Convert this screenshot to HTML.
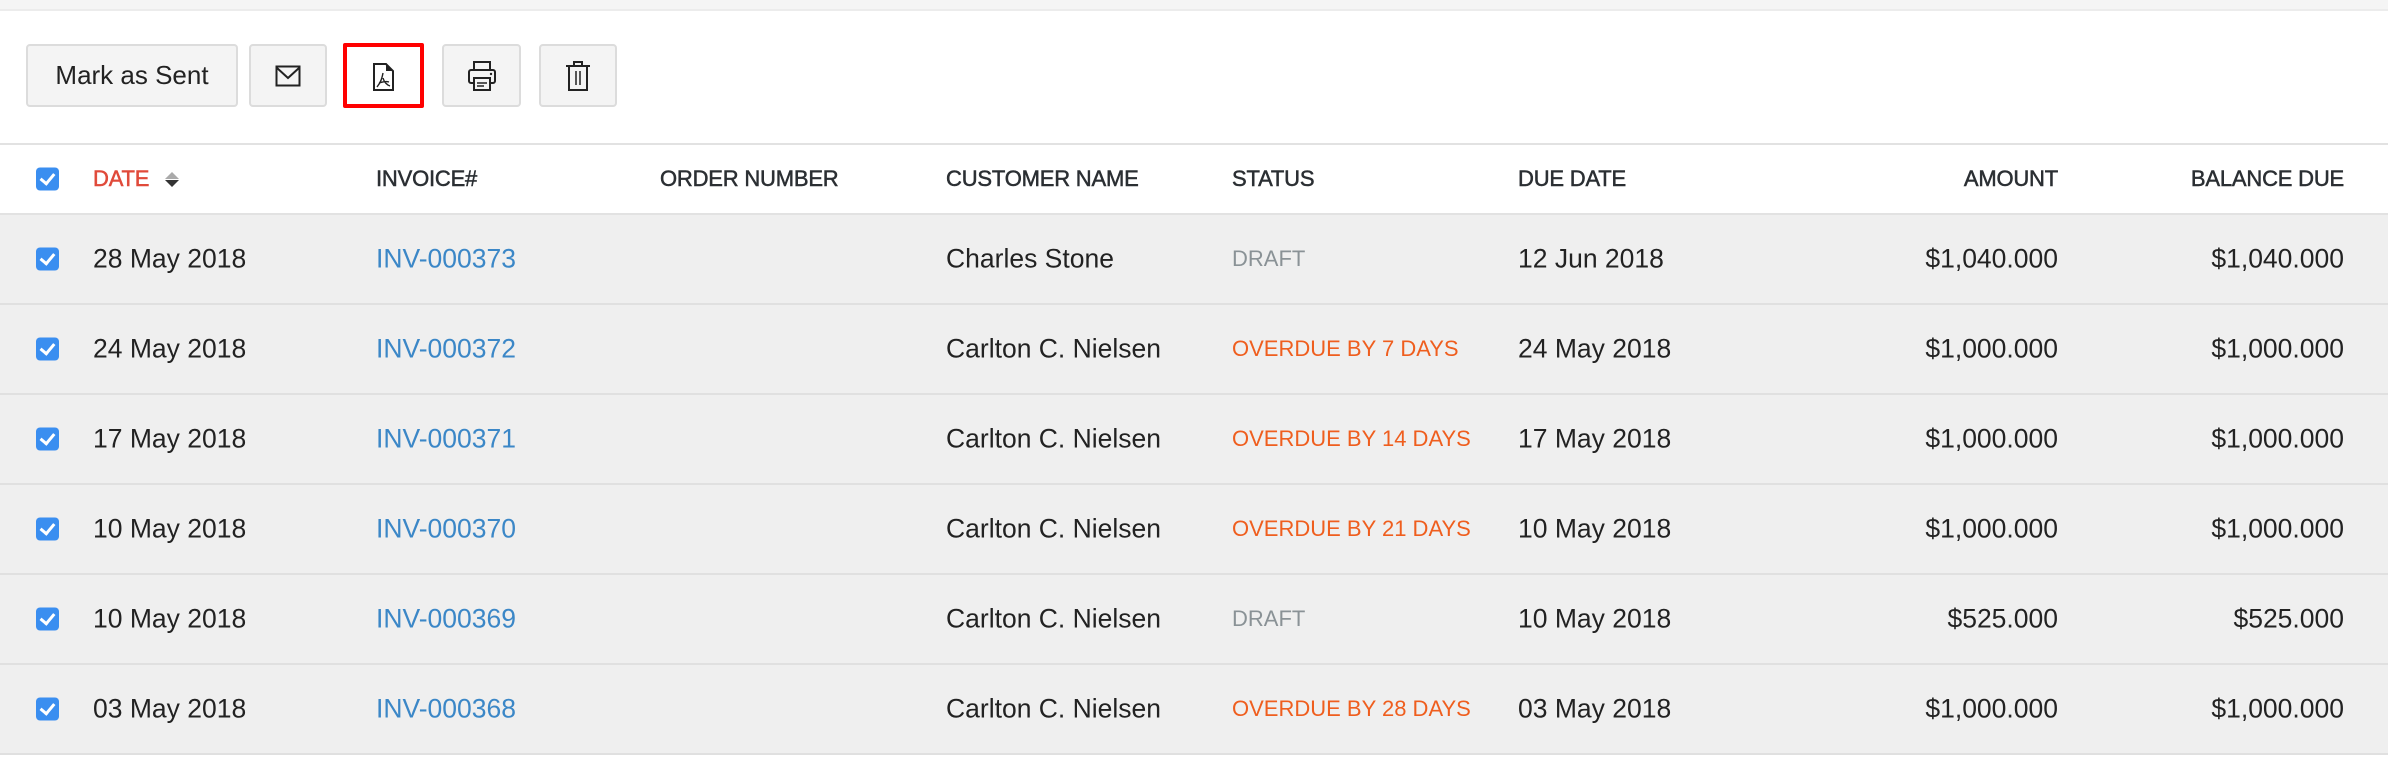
<!DOCTYPE html>
<html><head><meta charset="utf-8"><style>
*{margin:0;padding:0;box-sizing:border-box}
body{width:2388px;height:760px;overflow:hidden;background:#fff;font-family:"Liberation Sans",sans-serif;color:#222;position:relative}
.top{position:absolute;left:0;top:0;width:2388px;height:11px;background:#f5f5f5;border-bottom:2px solid #ececec}
.btn{position:absolute;top:44px;height:63px;background:#f4f4f4;border:2px solid #dcdcdc;border-radius:4px;display:flex;align-items:center;justify-content:center}
.red{position:absolute;left:343px;top:43px;width:81px;height:65px;border:4px solid #f00;border-radius:2px;background:#fff}
.hdr{position:absolute;left:0;top:143px;width:2388px;height:72px;border-top:2px solid #e2e2e2;border-bottom:2px solid #e2e2e2;background:#fff}
.row{position:absolute;left:0;width:2388px;height:90px;background:#efefef;border-bottom:2px solid #e0e0e0}
.c{position:absolute;top:50%;transform:translateY(-50%);white-space:nowrap}
.h{font-size:22px;color:#2b2f33;-webkit-text-stroke:0.5px #2b2f33;letter-spacing:-0.2px}
.t{font-size:26.5px;color:#222}
.cb{position:absolute;left:36px;width:23px;height:23px;background:#3a8ef0;border-radius:4px;top:50%;transform:translateY(-50%)}
.cb:after{content:"";position:absolute;left:7px;top:3px;width:6px;height:11px;border:solid #fff;border-width:0 3px 3px 0;transform:rotate(40deg)}
.inv{color:#3b87c7}
.draft{font-size:22px;color:#8a9296}
.od{font-size:22px;color:#ef5e1e}
</style></head><body>
<div class="top"></div>
<div class="btn" style="left:26px;width:212px;font-size:26px;color:#222">Mark as Sent</div>
<div class="btn" style="left:249px;width:78px"><svg width="26" height="22" viewBox="0 0 26 22"><rect x="1.5" y="1.5" width="23" height="19" fill="none" stroke="#222" stroke-width="2"/><path d="M1.5 2.5 L13 13 L24.5 2.5" fill="none" stroke="#222" stroke-width="2"/></svg></div>
<div class="red"></div>
<svg style="position:absolute;left:372px;top:62px" width="24" height="30" viewBox="0 0 24 30"><path d="M2 2 H14 L21 9 V28 H2 Z" fill="none" stroke="#222" stroke-width="2"/><path d="M14 2 V9 H21 Z" fill="#222"/><path d="M11 11 C10 16 9 20 5 25 M11 16 C12 20 15 23 18 24 M7 21 C10 20 14 19 17 20" fill="none" stroke="#222" stroke-width="1.4"/></svg>
<div class="btn" style="left:442px;width:79px"><svg width="30" height="32" viewBox="0 0 30 32"><rect x="7" y="2" width="16" height="8" fill="none" stroke="#222" stroke-width="2"/><rect x="2" y="10" width="26" height="13" rx="2" fill="none" stroke="#222" stroke-width="2"/><rect x="7" y="18" width="16" height="12" fill="#f4f4f4" stroke="#222" stroke-width="2"/><path d="M10 23 H20 M10 26 H17" stroke="#222" stroke-width="1.5"/><circle cx="24" cy="14" r="1.2" fill="#222"/></svg></div>
<div class="btn" style="left:539px;width:78px"><svg width="26" height="32" viewBox="0 0 26 32"><path d="M1 6 H25 M9 6 V2 H17 V6" fill="none" stroke="#222" stroke-width="2"/><rect x="4" y="6" width="18" height="24" fill="none" stroke="#222" stroke-width="2"/><path d="M11 11 V25 M15 11 V25" stroke="#222" stroke-width="1.5"/></svg></div>

<div class="hdr">
<div class="cb"></div>
<div class="c h" style="left:93px;color:#e04a3a;-webkit-text-stroke:0.5px #e04a3a">DATE <span style="display:inline-block;vertical-align:middle;margin-left:10px;width:0;height:0;border-left:7px solid transparent;border-right:7px solid transparent;border-bottom:7px solid #aaa;position:relative;top:-5px"></span><span style="display:inline-block;vertical-align:middle;margin-left:-14px;width:0;height:0;border-left:7px solid transparent;border-right:7px solid transparent;border-top:7px solid #333;position:relative;top:3px"></span></div>
<div class="c h" style="left:376px">INVOICE#</div>
<div class="c h" style="left:660px">ORDER NUMBER</div>
<div class="c h" style="left:946px">CUSTOMER NAME</div>
<div class="c h" style="left:1232px">STATUS</div>
<div class="c h" style="left:1518px">DUE DATE</div>
<div class="c h" style="right:330px">AMOUNT</div>
<div class="c h" style="right:44px">BALANCE DUE</div>
</div>

<div class="row" style="top:215px"><div class="cb"></div><div class="c t" style="left:93px">28 May 2018</div><div class="c t inv" style="left:376px">INV-000373</div><div class="c t" style="left:946px">Charles Stone</div><div class="c draft" style="left:1232px">DRAFT</div><div class="c t" style="left:1518px">12 Jun 2018</div><div class="c t" style="right:330px">$1,040.000</div><div class="c t" style="right:44px">$1,040.000</div></div>
<div class="row" style="top:305px"><div class="cb"></div><div class="c t" style="left:93px">24 May 2018</div><div class="c t inv" style="left:376px">INV-000372</div><div class="c t" style="left:946px">Carlton C. Nielsen</div><div class="c od" style="left:1232px">OVERDUE BY 7 DAYS</div><div class="c t" style="left:1518px">24 May 2018</div><div class="c t" style="right:330px">$1,000.000</div><div class="c t" style="right:44px">$1,000.000</div></div>
<div class="row" style="top:395px"><div class="cb"></div><div class="c t" style="left:93px">17 May 2018</div><div class="c t inv" style="left:376px">INV-000371</div><div class="c t" style="left:946px">Carlton C. Nielsen</div><div class="c od" style="left:1232px">OVERDUE BY 14 DAYS</div><div class="c t" style="left:1518px">17 May 2018</div><div class="c t" style="right:330px">$1,000.000</div><div class="c t" style="right:44px">$1,000.000</div></div>
<div class="row" style="top:485px"><div class="cb"></div><div class="c t" style="left:93px">10 May 2018</div><div class="c t inv" style="left:376px">INV-000370</div><div class="c t" style="left:946px">Carlton C. Nielsen</div><div class="c od" style="left:1232px">OVERDUE BY 21 DAYS</div><div class="c t" style="left:1518px">10 May 2018</div><div class="c t" style="right:330px">$1,000.000</div><div class="c t" style="right:44px">$1,000.000</div></div>
<div class="row" style="top:575px"><div class="cb"></div><div class="c t" style="left:93px">10 May 2018</div><div class="c t inv" style="left:376px">INV-000369</div><div class="c t" style="left:946px">Carlton C. Nielsen</div><div class="c draft" style="left:1232px">DRAFT</div><div class="c t" style="left:1518px">10 May 2018</div><div class="c t" style="right:330px">$525.000</div><div class="c t" style="right:44px">$525.000</div></div>
<div class="row" style="top:665px"><div class="cb"></div><div class="c t" style="left:93px">03 May 2018</div><div class="c t inv" style="left:376px">INV-000368</div><div class="c t" style="left:946px">Carlton C. Nielsen</div><div class="c od" style="left:1232px">OVERDUE BY 28 DAYS</div><div class="c t" style="left:1518px">03 May 2018</div><div class="c t" style="right:330px">$1,000.000</div><div class="c t" style="right:44px">$1,000.000</div></div>
</body></html>
